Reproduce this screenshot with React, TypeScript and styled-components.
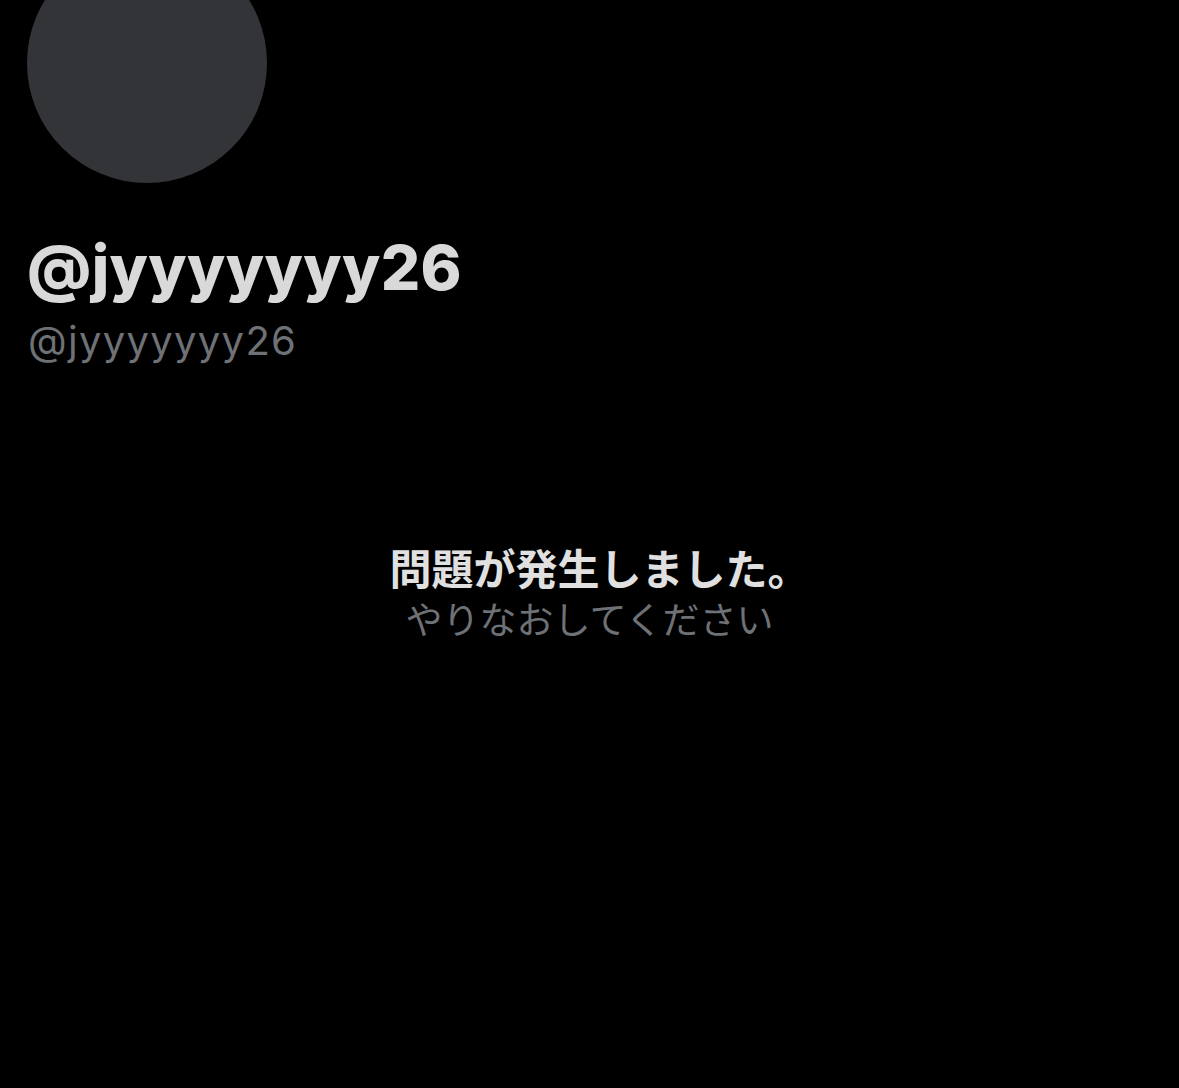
import React from "react";
import styled, { createGlobalStyle } from "styled-components";

const Global = createGlobalStyle`
  html, body {
    margin: 0;
    padding: 0;
    background: #000;
  }
  body {
    font-family: Inter, "Noto Sans CJK JP", sans-serif;
    overflow: hidden;
  }
`;

const Page = styled.div`
  width: 1179px;
  height: 1088px;
  background: #000;
  display: flex;
  flex-direction: column;
  overflow: hidden;
`;

const Header = styled.div`
  display: flex;
  flex-direction: column;
  padding-left: 27px;
`;

const Avatar = styled.div`
  width: 240px;
  height: 240px;
  border-radius: 50%;
  background: #333438;
  margin-top: -57px;
`;

const DisplayName = styled.div`
  margin-top: 48px;
  color: #d9d9d9;
  font-family: Inter, "Liberation Sans", sans-serif;
  font-weight: 800;
  font-size: 62px;
  line-height: 74px;
  letter-spacing: 0.4px;
`;

const Handle = styled.div`
  margin-top: 12px;
  padding-left: 1px;
  color: #6e7175;
  font-family: Inter, "Liberation Sans", sans-serif;
  font-size: 40px;
  line-height: 48px;
  letter-spacing: 1.3px;
`;

const Message = styled.div`
  margin-top: 179px;
  display: flex;
  flex-direction: column;
  align-items: center;
  gap: 7px;
  font-family: "Noto Sans CJK JP", sans-serif;
`;

const MessageTitle = styled.div`
  color: #e0e0e0;
  font-weight: 700;
  font-size: 42px;
  line-height: 46px;
  padding-left: 20px;
`;

const MessageSub = styled.div`
  color: #6e7175;
  font-size: 37px;
  line-height: 42px;
`;

export default function App() {
  return (
    <Page>
      <Global />
      <Header>
        <Avatar />
        <DisplayName>@jyyyyyyy26</DisplayName>
        <Handle>@jyyyyyyy26</Handle>
      </Header>
      <Message>
        <MessageTitle>問題が発生しました。</MessageTitle>
        <MessageSub>やりなおしてください</MessageSub>
      </Message>
    </Page>
  );
}
